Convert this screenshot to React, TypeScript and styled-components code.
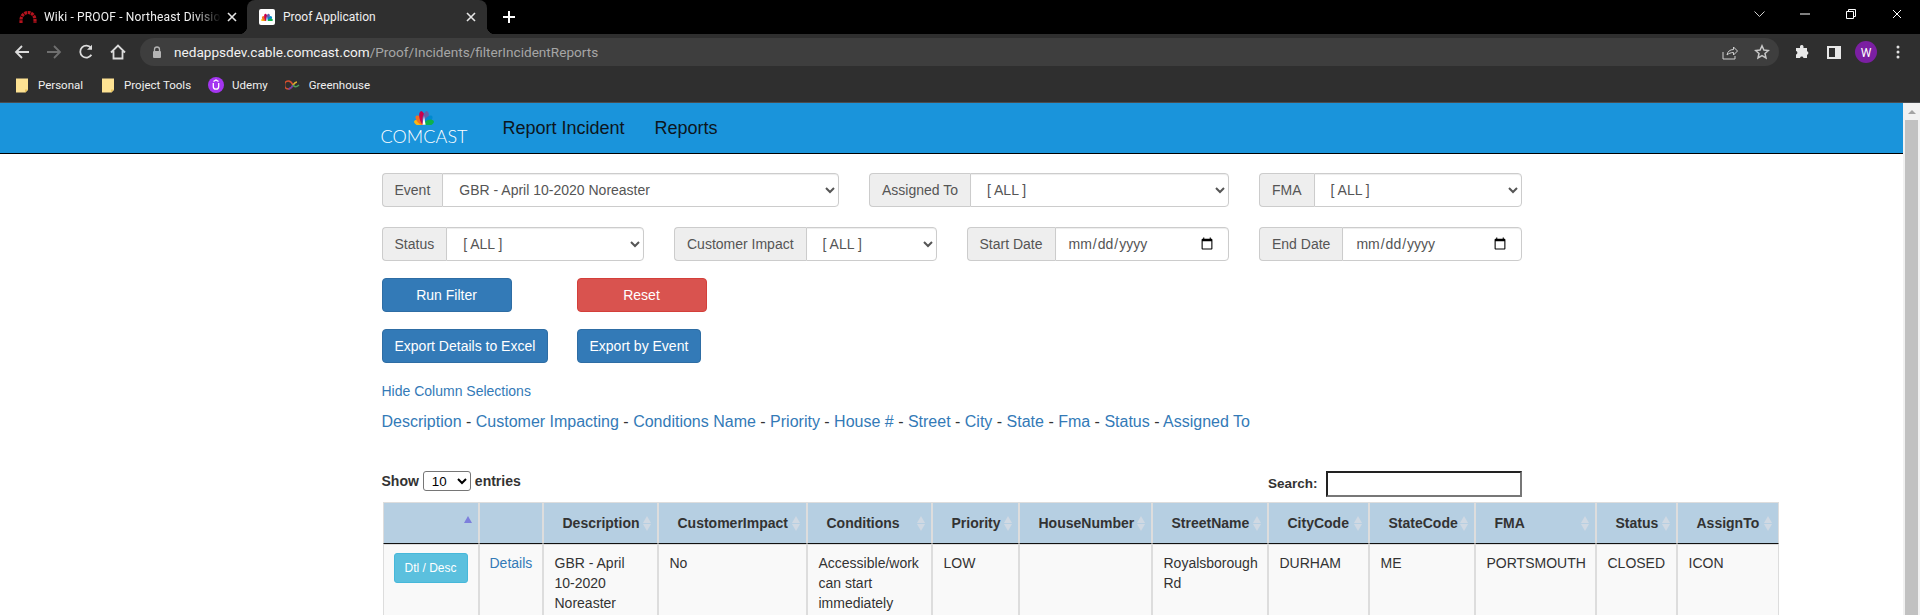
import React from "react";
import styled, { createGlobalStyle } from "styled-components";

const Global = createGlobalStyle`
  html, body { margin: 0; padding: 0; height: 615px; overflow: hidden; background: #fff; }
  * { box-sizing: border-box; }
  body { font-family: "Liberation Sans", Arial, sans-serif; font-size: 14px; line-height: 20px; color: #333; }
`;

const Shell = styled.div`display: flex; flex-direction: column; width: 1920px; height: 615px; overflow: hidden;`;

/* Browser chrome */
const Browser = styled.header`flex: none; font-family: Roboto, "Noto Sans", sans-serif; color: #fff; background: #2f2f2f;`;
const TabStrip = styled.div`display: flex; height: 34px; background: #000;`;
const InactiveTab = styled.div`
  display: flex; align-items: center; width: 247px; padding: 0 7px 0 19px; font-size: 12px; letter-spacing: 0.17px; color: #f0f0f0;
`;
const TabTitle = styled.span<{ $fade?: boolean }>`
  flex: 1; min-width: 0; white-space: nowrap; overflow: hidden;
  ${p => p.$fade ? "mask-image: linear-gradient(90deg, #000 85%, transparent 100%);" : ""}
`;
const ActiveTab = styled.div`
  position: relative; display: flex; align-items: center; width: 240px; padding: 0 8px 0 12px;
  background: #2f2f2f; border-radius: 8px 8px 0 0; font-size: 12px; color: #f0f0f0;
  &::before, &::after { content: ""; position: absolute; bottom: 0; width: 8px; height: 8px; }
  &::before { left: -8px; background: radial-gradient(circle at 0 0, #000 8px, #2f2f2f 8.5px); }
  &::after { right: -8px; background: radial-gradient(circle at 100% 0, #000 8px, #2f2f2f 8.5px); }
`;
const Favicon = styled.span`
  flex: none; display: flex; align-items: center; justify-content: center;
  width: 16px; height: 16px; margin-right: 8px; background: #fff; border-radius: 2px;
`;
const RedIcon = styled.span`flex: none; display: flex; width: 18px; margin-right: 7px;`;
const CloseBox = styled.span`flex: none; display: flex; align-items: center; justify-content: center; width: 16px; height: 16px; margin-left: 3px;`;
const NewTab = styled.span`display: flex; align-items: center; justify-content: center; width: 32px; margin-left: 6px;`;
const WindowControls = styled.div`display: flex; margin-left: auto;`;
const WindowBtn = styled.span`display: flex; align-items: center; justify-content: center; width: 46px; height: 28px;`;

const Toolbar = styled.div`display: flex; align-items: center; height: 34px; padding: 4px 6px 2px;`;
const ToolIcon = styled.span`flex: none; display: flex; align-items: center; justify-content: center; width: 32px; height: 28px;`;
const Omnibox = styled.div`
  flex: 1; display: flex; align-items: center; height: 28px; margin: 0 7px 0 6px; padding: 0 1px 0 12px;
  background: #3e3e3e; border-radius: 14px; font-size: 13.6px;
`;
const Lock = styled.span`flex: none; display: flex; width: 12px; margin-right: 10px;`;
const Url = styled.span`flex: 1; color: #a6a6a6; white-space: nowrap;`;
const Host = styled.span`color: #f2f2f2;`;

const Bookmarks = styled.div`
  display: flex; align-items: center; gap: 17px; height: 35px; padding: 0 14px 1px;
  border-bottom: 1px solid #4a4c4f; font-size: 11.5px; color: #f0f0f0;
`;
const Bookmark = styled.span`display: flex; align-items: center; gap: 8px;`;
const Mark = styled.span`flex: none; display: flex; width: 16px; height: 16px; align-items: center; justify-content: center;`;

/* Viewport */
const Viewport = styled.div`flex: 1; min-height: 0; display: flex;`;
const Page = styled.main`flex: 1; min-width: 0; overflow: hidden;`;
const Scrollbar = styled.aside`flex: none; display: flex; flex-direction: column; align-items: center; width: 17px; background: #f1f1f1;`;
const ScrollUp = styled.span`
  flex: none; width: 0; height: 0; margin: 7px 0 6px;
  border-left: 4px solid transparent; border-right: 4px solid transparent; border-bottom: 4px solid #a3a3a3;
`;
const ScrollThumb = styled.span`flex: 1; width: 13px; background: #c1c1c1;`;

const NavBar = styled.nav`height: 51px; background: #1a94db; border-bottom: 1px solid #000;`;
const NavInner = styled.div`display: flex; align-items: center; width: 1170px; height: 50px; margin: 0 auto; padding: 0 15px;`;
const Logo = styled.div`display: flex; flex-direction: column; align-items: center; width: 85px; margin: -3px 36px 0 0; color: #fff;`;
const LogoWord = styled.span`font-family: Lato, sans-serif; font-weight: 300; font-size: 18px; line-height: 14px; margin-top: 4px; letter-spacing: 0.1px; white-space: nowrap;`;
const NavLink = styled.a`font-size: 18px; color: #0d1620; margin-right: 30px;`;

const Container = styled.div`width: 1170px; margin: 0 auto; padding: 19px 15px 0;`;
const FilterGrid = styled.div`display: grid; grid-template-columns: repeat(12, 1fr); gap: 20px 30px;`;
const InputGroup = styled.div<{ $span: number }>`display: flex; height: 34px; grid-column: span ${p => p.$span};`;
const Addon = styled.span`
  flex: none; display: flex; align-items: center; padding: 0 12px; color: #555; background: #eee;
  border: 1px solid #ccc; border-right: 0; border-radius: 4px 0 0 4px; white-space: nowrap;
`;
const Select = styled.select`
  flex: 1; min-width: 0; height: 34px; padding: 6px 12px; font: inherit; color: #555; background: #fff;
  border: 1px solid #ccc; border-radius: 0 4px 4px 0; box-shadow: inset 0 1px 1px rgba(0,0,0,.075);
`;
const DateInput = styled.input`
  flex: 1; min-width: 0; height: 34px; padding: 6px 12px; font: inherit; color: #555; background: #fff;
  border: 1px solid #ccc; border-radius: 0 4px 4px 0; box-shadow: inset 0 1px 1px rgba(0,0,0,.075);
`;
const ButtonGrid = styled.div`display: grid; grid-template-columns: 195px auto; justify-content: start; justify-items: start; gap: 17px 0; margin-top: 17px;`;
const Button = styled.button<{ $tone: "primary" | "danger"; $wide?: boolean }>`
  height: 34px; padding: 0 12px; font: inherit; color: #fff; border-radius: 4px; border: 1px solid;
  width: ${p => p.$wide ? "130px" : "auto"};
  background: ${p => p.$tone === "primary" ? "#337ab7" : "#d9534f"};
  border-color: ${p => p.$tone === "primary" ? "#2e6da4" : "#d43f3a"};
`;
const Link = styled.a`color: #337ab7; text-decoration: none;`;
const HideLink = styled.p`margin: 18px 0 0; line-height: 20px; color: #337ab7;`;
const ColumnLine = styled.p`margin: 11px 0 0; font-size: 16px; line-height: 20px; color: #333;`;
const TableTop = styled.div`display: flex; justify-content: space-between; align-items: flex-start; margin-top: 39px; font-weight: 700; line-height: 20px; color: #333;`;
const LengthLabel = styled.label`display: flex; align-items: center; gap: 4px; font-size: 14px;`;
const LengthSelect = styled.select`
  width: 48px; height: 20px; padding: 0 0 0 4px; font: 400 13.33px "Liberation Sans", sans-serif; color: #000; background: #fff;
  border: 1px solid #767676; border-radius: 3px;
`;
const SearchLabel = styled.label`display: flex; align-items: center; gap: 8px; height: 26px; font-size: 13.5px;`;
const SearchInput = styled.input`
  width: 196px; height: 26px; padding: 1px 2px; background: #fff;
  border-style: solid; border-width: 2px; border-color: #222 #777 #777 #222;
`;

const Table = styled.table`
  table-layout: fixed; width: 1395px; margin: 5px 0 0 1px; border-collapse: separate; border-spacing: 0;
`;
const Th = styled.th`
  position: relative; height: 42px; padding: 10px 18px 10px 19px; text-align: left; font-weight: 700; white-space: nowrap;
  background: #b6cfe2; border: 1px solid #ddd; border-bottom: 1px solid #111; color: #333;
`;
const SortBoth = styled.span`
  position: absolute; right: 6px; top: 13px; width: 8px; height: 15px;
  &::before, &::after { content: ""; position: absolute; left: 0; border-left: 4px solid transparent; border-right: 4px solid transparent; }
  &::before { top: 0; border-bottom: 7px solid #d0d9e3; }
  &::after { bottom: 0; border-top: 7px solid #d0d9e3; }
`;
const SortAsc = styled.span`
  position: absolute; right: 6px; top: 13px; width: 0; height: 0;
  border-left: 4px solid transparent; border-right: 4px solid transparent; border-bottom: 7px solid #7d7fdc;
`;
const Td = styled.td<{ $lead?: boolean }>`
  padding: 8px 10px 8px ${p => p.$lead ? "10px" : "11px"}; vertical-align: top; background: #f9f9f9; border: 1px solid #ddd; color: #333;
`;
const InfoButton = styled.button`
  height: 30px; padding: 0 10px; font: 12px "Liberation Sans", sans-serif; color: #fff; white-space: nowrap;
  background: #5bc0de; border: 1px solid #46b8da; border-radius: 3px;
`;

const feathers: [number, number, string][] = [
  [-70, 10.5, "#fcb711"], [-42, 12, "#f37021"], [-13, 14, "#cc004c"],
  [13, 14, "#6460aa"], [42, 12, "#0089d0"], [70, 10.5, "#0db14b"],
];
const Peacock = ({ size }: { size: number }) => (
  <svg width={size} height={size * 0.62} viewBox="0 0 24 15">
    {feathers.map(([a, len, c]) => (
      <ellipse key={a} cx="12" cy={14.8 - len / 2} rx="3" ry={len / 2} fill={c} transform={`rotate(${a} 12 14.8)`} />
    ))}
    <path d="M12 6 L13.6 14.8 H10.4 Z" fill="#fff" />
  </svg>
);

const stroke = { fill: "none", stroke: "#dcdcdc", strokeWidth: 1.8 } as const;
const X = ({ s = 10, w = 1.6, c = "#e6e6e6" }: { s?: number; w?: number; c?: string }) => (
  <svg width={s} height={s} viewBox="0 0 10 10"><path d="M1 1L9 9M9 1L1 9" stroke={c} strokeWidth={w} fill="none" /></svg>
);
const Folder = () => (
  <svg width="14" height="16" viewBox="0 0 14 16"><path d="M1 1.5h8l4 0v11.5l-2.5 2.5H1z" fill="#fde293" /><path d="M13 12.5h-3v3z" fill="#e8c35a" /></svg>
);

const columns = ["Description", "Customer Impacting", "Conditions Name", "Priority", "House #", "Street", "City", "State", "Fma", "Status", "Assigned To"];
const headers: [string, number][] = [
  ["Description", 115], ["CustomerImpact", 149], ["Conditions", 125], ["Priority", 87], ["HouseNumber", 133], ["StreetName", 116],
  ["CityCode", 101], ["StateCode", 106], ["FMA", 121], ["Status", 81], ["AssignTo", 102],
];
const cells = ["GBR - April 10-2020 Noreaster", "No", "Accessible/work can start immediately", "LOW", "", "Royalsborough Rd", "DURHAM", "ME", "PORTSMOUTH", "CLOSED", "ICON"];

export default function App() {
  return (
    <Shell>
      <Global />
      <Browser>
        <TabStrip>
          <InactiveTab>
            <RedIcon>
              <svg width="18" height="12" viewBox="0 0 18 12"><path d="M2 12V9A7 7.5 0 0 1 16 9V12" fill="none" stroke="#b3121d" strokeWidth="3.2" strokeDasharray="2.8 .7" /></svg>
            </RedIcon>
            <TabTitle $fade>Wiki - PROOF - Northeast Division</TabTitle>
            <CloseBox><X /></CloseBox>
          </InactiveTab>
          <ActiveTab>
            <Favicon><Peacock size={14} /></Favicon>
            <TabTitle>Proof Application</TabTitle>
            <CloseBox><X /></CloseBox>
          </ActiveTab>
          <NewTab>
            <svg width="12" height="12" viewBox="0 0 12 12"><path d="M6 0V12M0 6H12" stroke="#fff" strokeWidth="2" /></svg>
          </NewTab>
          <WindowControls>
            <WindowBtn><svg width="11" height="6" viewBox="0 0 11 6"><path d="M.5.5L5.5 5.5L10.5.5" fill="none" stroke="#d0d0d0" /></svg></WindowBtn>
            <WindowBtn><svg width="10" height="2" viewBox="0 0 10 2"><path d="M0 1H10" stroke="#fff" /></svg></WindowBtn>
            <WindowBtn><svg width="10" height="10" viewBox="0 0 10 10"><path d="M.5 2.5h7v7h-7zM2.5 2.5v-2h7v7h-2" fill="none" stroke="#fff" /></svg></WindowBtn>
            <WindowBtn><X s={10} w={1} c="#fff" /></WindowBtn>
          </WindowControls>
        </TabStrip>
        <Toolbar>
          <ToolIcon><svg width="16" height="16" viewBox="0 0 16 16"><path d="M15 8H2M8 2L2 8l6 6" {...stroke} /></svg></ToolIcon>
          <ToolIcon><svg width="16" height="16" viewBox="0 0 16 16"><path d="M1 8h13M8 2l6 6-6 6" {...stroke} stroke="#6f6f6f" /></svg></ToolIcon>
          <ToolIcon><svg width="16" height="16" viewBox="0 0 16 16"><path d="M13.4 10.8A6 6 0 1 1 13 4" {...stroke} /><path d="M14 .8v5h-5z" fill="#dcdcdc" /></svg></ToolIcon>
          <ToolIcon><svg width="16" height="16" viewBox="0 0 16 16"><path d="M1 8.5L8 1.500l7 7M3.500 7v7.500h9V7" {...stroke} /></svg></ToolIcon>
          <Omnibox>
            <Lock><svg width="10" height="12" viewBox="0 0 10 12"><path d="M2.500 5V3.500a2.500 2.500 0 0 1 5 0V5" fill="none" stroke="#b4b4b4" strokeWidth="1.300" /><rect x="1" y="5" width="8" height="7" rx="1" fill="#b4b4b4" /></svg></Lock>
            <Url><Host>nedappsdev.cable.comcast.com</Host>/Proof/Incidents/filterIncidentReports</Url>
            <ToolIcon><svg width="16" height="16" viewBox="0 0 16 16"><path d="M1 8v7h12v-3M5 11c.5-3.500 3-5.500 6.500-5.500V3L15.500 7l-4 4V8.500C9 8.500 6.500 9.500 5 11z" fill="none" stroke="#d0d0d0" /></svg></ToolIcon>
            <ToolIcon><svg width="16" height="16" viewBox="0 0 16 16"><path d="M8 1.800l1.900 4.200 4.500.5-3.400 3 1 4.500L8 11.700 4 14l1-4.500-3.400-3 4.500-.5z" fill="none" stroke="#c8c8c8" strokeWidth="1.500" /></svg></ToolIcon>
          </Omnibox>
          <ToolIcon><svg width="16" height="16" viewBox="0 0 16 16"><path d="M6 2.500a1.800 1.800 0 0 1 3.500 0V4h3.500v3.200a1.800 1.800 0 0 1 0 3.500V14H9.500a1.800 1.800 0 0 0-3.500 0H2v-3.500a1.800 1.800 0 0 0 0-3.500V4h4z" fill="#e8e8e8" /></svg></ToolIcon>
          <ToolIcon><svg width="14" height="13" viewBox="0 0 14 13"><path d="M0 0h14v13H0z" fill="#e8e8e8" /><path d="M2 2h6v9H2z" fill="#2f2f2f" /></svg></ToolIcon>
          <ToolIcon>
            <svg width="22" height="22" viewBox="0 0 22 22"><circle cx="11" cy="11" r="11" fill="#7b1fa2" /><text x="11" y="15.500" textAnchor="middle" fontSize="12" fill="#fff" fontFamily="Roboto, sans-serif">W</text></svg>
          </ToolIcon>
          <ToolIcon><svg width="4" height="14" viewBox="0 0 4 14"><circle cx="2" cy="2" r="1.500" fill="#e0e0e0" /><circle cx="2" cy="7" r="1.500" fill="#e0e0e0" /><circle cx="2" cy="12" r="1.500" fill="#e0e0e0" /></svg></ToolIcon>
        </Toolbar>
        <Bookmarks>
          <Bookmark><Mark><Folder /></Mark>Personal</Bookmark>
          <Bookmark><Mark><Folder /></Mark>Project Tools</Bookmark>
          <Bookmark>
            <Mark><svg width="16" height="16" viewBox="0 0 16 16"><circle cx="8" cy="8" r="8" fill="#a435f0" /><path d="M5.300 6v3.500a2.700 2.700 0 0 0 5.400 0V6M5.500 4.500L8 3l2.500 1.500" fill="none" stroke="#fff" strokeWidth="1.300" /></svg></Mark>
            Udemy
          </Bookmark>
          <Bookmark>
            <Mark><svg width="16" height="10" viewBox="0 0 16 10"><path d="M8 5C6.500 2 5 1 3.500 1a4 4 0 0 0 0 8C5 9 6.500 8 8 5" fill="none" stroke="#d8502f" strokeWidth="1.600" /><path d="M3.500 9C5 9 6.500 8 8 5" fill="none" stroke="#6a3fb0" strokeWidth="1.600" /><path d="M8 5c1.500-2 3-3 4-3" fill="none" stroke="#e0b030" strokeWidth="1.600" /><path d="M8 5c1.500 2 3 2.500 6 0" fill="none" stroke="#4f9d5b" strokeWidth="1.600" /></svg></Mark>
            Greenhouse
          </Bookmark>
        </Bookmarks>
      </Browser>
      <Viewport>
        <Page>
          <NavBar>
            <NavInner>
              <Logo>
                <Peacock size={24} />
                <LogoWord>COMCAST</LogoWord>
              </Logo>
              <NavLink>Report Incident</NavLink>
              <NavLink>Reports</NavLink>
            </NavInner>
          </NavBar>
          <Container>
            <FilterGrid>
              <InputGroup $span={5}>
                <Addon>Event</Addon>
                <Select defaultValue="a"><option value="a">GBR - April 10-2020 Noreaster</option></Select>
              </InputGroup>
              <InputGroup $span={4}>
                <Addon>Assigned To</Addon>
                <Select><option>[ ALL ]</option></Select>
              </InputGroup>
              <InputGroup $span={3}>
                <Addon>FMA</Addon>
                <Select><option>[ ALL ]</option></Select>
              </InputGroup>
              <InputGroup $span={3}>
                <Addon>Status</Addon>
                <Select><option>[ ALL ]</option></Select>
              </InputGroup>
              <InputGroup $span={3}>
                <Addon>Customer Impact</Addon>
                <Select><option>[ ALL ]</option></Select>
              </InputGroup>
              <InputGroup $span={3}>
                <Addon>Start Date</Addon>
                <DateInput type="date" />
              </InputGroup>
              <InputGroup $span={3}>
                <Addon>End Date</Addon>
                <DateInput type="date" />
              </InputGroup>
            </FilterGrid>
            <ButtonGrid>
              <Button $tone="primary" $wide>Run Filter</Button>
              <Button $tone="danger" $wide>Reset</Button>
              <Button $tone="primary">Export Details to Excel</Button>
              <Button $tone="primary">Export by Event</Button>
            </ButtonGrid>
            <HideLink>Hide Column Selections</HideLink>
            <ColumnLine>
              {columns.map((c, i) => (
                <React.Fragment key={c}>{i > 0 && " - "}<Link>{c}</Link></React.Fragment>
              ))}
            </ColumnLine>
            <TableTop>
              <LengthLabel>Show <LengthSelect><option>10</option></LengthSelect> entries</LengthLabel>
              <SearchLabel>Search: <SearchInput /></SearchLabel>
            </TableTop>
            <Table>
              <colgroup>
                <col style={{ width: 96 }} />
                <col style={{ width: 64 }} />
                {headers.map(([h, w]) => <col key={h} style={{ width: w }} />)}
              </colgroup>
              <thead>
                <tr>
                  <Th><SortAsc /></Th>
                  <Th />
                  {headers.map(([h]) => <Th key={h}>{h}<SortBoth /></Th>)}
                </tr>
              </thead>
              <tbody>
                <tr>
                  <Td $lead><InfoButton>Dtl / Desc</InfoButton></Td>
                  <Td $lead><Link>Details</Link></Td>
                  {cells.map((c, i) => <Td key={i}>{c}</Td>)}
                </tr>
              </tbody>
            </Table>
          </Container>
        </Page>
        <Scrollbar>
          <ScrollUp />
          <ScrollThumb />
        </Scrollbar>
      </Viewport>
    </Shell>
  );
}
